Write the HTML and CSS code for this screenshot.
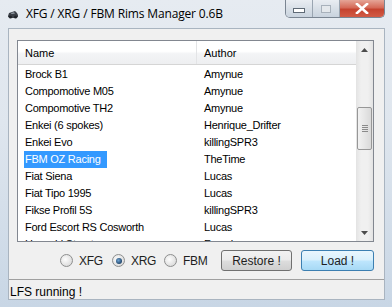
FILE: index.html
```html
<!DOCTYPE html>
<html lang="en">
<head>
    <meta charset="UTF-8">
    <title>XFG / XRG / FBM Rims Manager 0.6B</title>
    <link rel="stylesheet" href="styles.css">
</head>
<body>

    <div class="window">
        <div class="titlebar">
            <svg class="app-icon" width="12" height="9" viewBox="0 0 12 9">
                <path d="M1 6 L2 3 L5 2 L8 1 L10 3 L11 5 L11 7 L9 8 L3 8 L1 7 Z" fill="#3a3f46"/>
                <circle cx="3.5" cy="7" r="1.5" fill="#1e2227"/>
                <circle cx="8.5" cy="7" r="1.5" fill="#1e2227"/>
                <path d="M4 3 L7 2.2 L8 3.5 L4.5 4 Z" fill="#9aa3ad"/>
            </svg>
            <span class="title">XFG / XRG / FBM Rims Manager 0.6B</span>
            <div class="caption-btns">
                <div class="cap-btn min"><span></span></div>
                <div class="cap-btn max"><span></span></div>
                <div class="cap-btn close">
                    <svg width="14" height="11" viewBox="0 0 14 11">
                        <path d="M2 1 L12 10 M12 1 L2 10" stroke="#ffffff" stroke-width="2.6" stroke-linecap="square"/>
                    </svg>
                </div>
            </div>
        </div>

        <div class="client">
            <div class="list-area">
                <div class="listview">
                    <div class="list-main">
                        <div class="list-header">
                            <div class="col-name">Name</div>
                            <div class="col-author">Author</div>
                        </div>
                        <div class="list-body">
                            <div class="row"><div class="col-name">Brock B1</div><div class="col-author">Amynue</div></div>
                            <div class="row"><div class="col-name">Compomotive M05</div><div class="col-author">Amynue</div></div>
                            <div class="row"><div class="col-name">Compomotive TH2</div><div class="col-author">Amynue</div></div>
                            <div class="row"><div class="col-name">Enkei (6 spokes)</div><div class="col-author">Henrique_Drifter</div></div>
                            <div class="row"><div class="col-name">Enkei Evo</div><div class="col-author">killingSPR3</div></div>
                            <div class="row selected"><div class="col-name"><span class="sel">FBM OZ Racing</span></div><div class="col-author">TheTime</div></div>
                            <div class="row"><div class="col-name">Fiat Siena</div><div class="col-author">Lucas</div></div>
                            <div class="row"><div class="col-name">Fiat Tipo 1995</div><div class="col-author">Lucas</div></div>
                            <div class="row"><div class="col-name">Fikse Profil 5S</div><div class="col-author">killingSPR3</div></div>
                            <div class="row"><div class="col-name">Ford Escort RS Cosworth</div><div class="col-author">Lucas</div></div>
                            <div class="row"><div class="col-name">Hayashi Street</div><div class="col-author">Franck</div></div>
                        </div>
                    </div>
                    <div class="scrollbar">
                        <div class="sb-arrow">
                            <svg width="7" height="4" viewBox="0 0 7 4"><path d="M0 4 L3.5 0 L7 4 Z" fill="#4d4d4d"/></svg>
                        </div>
                        <div class="sb-track">
                            <div class="sb-thumb">
                                <span></span><span></span><span></span><span></span>
                            </div>
                        </div>
                        <div class="sb-arrow">
                            <svg width="7" height="4" viewBox="0 0 7 4"><path d="M0 0 L7 0 L3.5 4 Z" fill="#4d4d4d"/></svg>
                        </div>
                    </div>
                </div>
            </div>

            <div class="controls">
                <label class="radio"><span class="dot"></span>XFG</label>
                <label class="radio checked"><span class="dot"></span>XRG</label>
                <label class="radio"><span class="dot"></span>FBM</label>
                <button class="btn restore">Restore !</button>
                <button class="btn load">Load !</button>
            </div>

            <div class="statusbar">LFS running !</div>
        </div>
    </div>

</body>
</html>
```

FILE: styles.css
```css
/* General Styles */
body {
    margin: 0;
    padding: 0;
    background-color: #ffffff;
    font-family: 'Liberation Sans', Arial, sans-serif;
}

.window {
    width: 392px;
    height: 307px;
    display: flex;
    flex-direction: column;
    background: linear-gradient(to bottom, #e6ebf1 0%, #dfe6ee 40%, #c8d6e5 100%);
    overflow: hidden;
}

/* Title bar */
.titlebar {
    height: 28px;
    display: flex;
    align-items: flex-start;
    flex-shrink: 0;
}

.app-icon {
    margin: 10px 0 0 7px;
}

.title {
    font-family: 'Open Sans', sans-serif;
    font-size: 12px;
    color: #000000;
    margin: 5px 0 0 7px;
    letter-spacing: -0.15px;
}

.caption-btns {
    display: flex;
    margin-left: auto;
    margin-right: 7px;
    height: 17px;
    border: 1px solid #7a8592;
    border-top: none;
    border-radius: 0 0 5px 5px;
    overflow: hidden;
}

.cap-btn {
    height: 17px;
    display: flex;
    align-items: center;
    justify-content: center;
}

.cap-btn.min,
.cap-btn.max {
    width: 26px;
    background: linear-gradient(to bottom, #e9edf2 0%, #d8dfe7 50%, #c9d3de 100%);
    border-right: 1px solid #9aa5b1;
}

.cap-btn.min span {
    width: 10px;
    height: 3px;
    margin-top: 4px;
    background: #ffffff;
    border: 1px solid #5f6a76;
}

.cap-btn.max span {
    width: 8px;
    height: 6px;
    border: 1px solid #a8b1bb;
    background: #e4e8ec;
}

.cap-btn.close {
    width: 44px;
    background: linear-gradient(to bottom, #e5a597 0%, #d56a58 45%, #c5432f 55%, #d25b45 100%);
}

/* Client area */
.client {
    flex: 1;
    margin: 0 7px 7px 8px;
    background-color: #f0f0f0;
    display: flex;
    flex-direction: column;
    border: 1px solid #a9b4c0;
}

.list-area {
    padding: 11px 10px 0 8px;
}

.listview {
    height: 200px;
    border: 1px solid #828790;
    background-color: #ffffff;
    display: flex;
}

.list-main {
    flex: 1;
    display: flex;
    flex-direction: column;
    overflow: hidden;
}

.list-header {
    height: 23px;
    display: flex;
    align-items: center;
    background: linear-gradient(to bottom, #ffffff 0%, #ffffff 45%, #f3f4f6 55%, #eeeff1 100%);
    border-bottom: 1px solid #d5d5d5;
    font-size: 11px;
    color: #000000;
    flex-shrink: 0;
}

.list-header .col-name {
    border-right: 1px solid #e3e4e6;
    height: 23px;
    line-height: 24px;
}

.col-name {
    width: 179px;
    padding-left: 7px;
    box-sizing: border-box;
    white-space: nowrap;
}

.col-author {
    padding-left: 7px;
    white-space: nowrap;
}

.list-body {
    padding-top: 1px;
    font-size: 11px;
    letter-spacing: -0.25px;
    color: #000000;
}

.row {
    height: 17px;
    line-height: 17px;
    display: flex;
}

.sel {
    display: inline-block;
    background-color: #3399ff;
    color: #ffffff;
    margin-left: -1px;
    padding: 0 6px 0 1px;
}

/* Scrollbar */
.scrollbar {
    width: 17px;
    display: flex;
    flex-direction: column;
    background: linear-gradient(to right, #e3e3e3, #f0f0f0 30%, #f0f0f0 70%, #e3e3e3);
}

.sb-arrow {
    height: 17px;
    display: flex;
    align-items: center;
    justify-content: center;
    flex-shrink: 0;
}

.sb-track {
    flex: 1;
    padding-top: 49px;
}

.sb-thumb {
    height: 41px;
    margin: 0 1px;
    border: 1px solid #979797;
    border-radius: 2px;
    background: linear-gradient(to right, #f2f2f2, #e6e6e6 50%, #d9d9d9);
    display: flex;
    flex-direction: column;
    align-items: center;
    justify-content: center;
    gap: 1px;
}

.sb-thumb span {
    width: 6px;
    height: 1px;
    background: #8a8a8a;
}

/* Controls */
.controls {
    height: 37px;
    display: flex;
    align-items: center;
    padding-left: 51px;
    font-size: 12px;
    letter-spacing: -0.3px;
    color: #1e1e1e;
    flex-shrink: 0;
}

.radio {
    display: flex;
    align-items: center;
    width: 52px;
    flex-shrink: 0;
}

.radio .dot {
    width: 11px;
    height: 11px;
    border-radius: 50%;
    border: 1px solid #8e8f8f;
    background: radial-gradient(circle at 40% 40%, #fdfdfd 0%, #e3e3e3 60%, #cfcfcf 100%);
    margin-right: 6px;
    display: flex;
    align-items: center;
    justify-content: center;
    flex-shrink: 0;
}

.radio.checked .dot::after {
    content: "";
    width: 6px;
    height: 6px;
    border-radius: 50%;
    background: radial-gradient(circle at 40% 40%, #6fa4d3 0%, #23476d 70%, #10233b 100%);
}

.btn {
    height: 21px;
    font-family: 'Liberation Sans', Arial, sans-serif;
    font-size: 12px;
    color: #1e1e1e;
    border: 1px solid #707070;
    border-radius: 3px;
    padding: 0;
    flex-shrink: 0;
}

.restore {
    width: 71px;
    margin-left: 5px;
    background: linear-gradient(to bottom, #f2f2f2 0%, #ebebeb 48%, #dddddd 52%, #cfcfcf 100%);
}

.load {
    width: 73px;
    margin-left: 9px;
    border-color: #3c7fb1;
    background: linear-gradient(to bottom, #eaf6fd 0%, #d9f0fc 48%, #bee6fd 52%, #a7d9f5 100%);
}

/* Status bar */
.statusbar {
    flex: 1;
    border-top: 1px solid #a0a0a0;
    font-size: 12px;
    color: #000000;
    padding: 5px 0 0 1px;
}
```
